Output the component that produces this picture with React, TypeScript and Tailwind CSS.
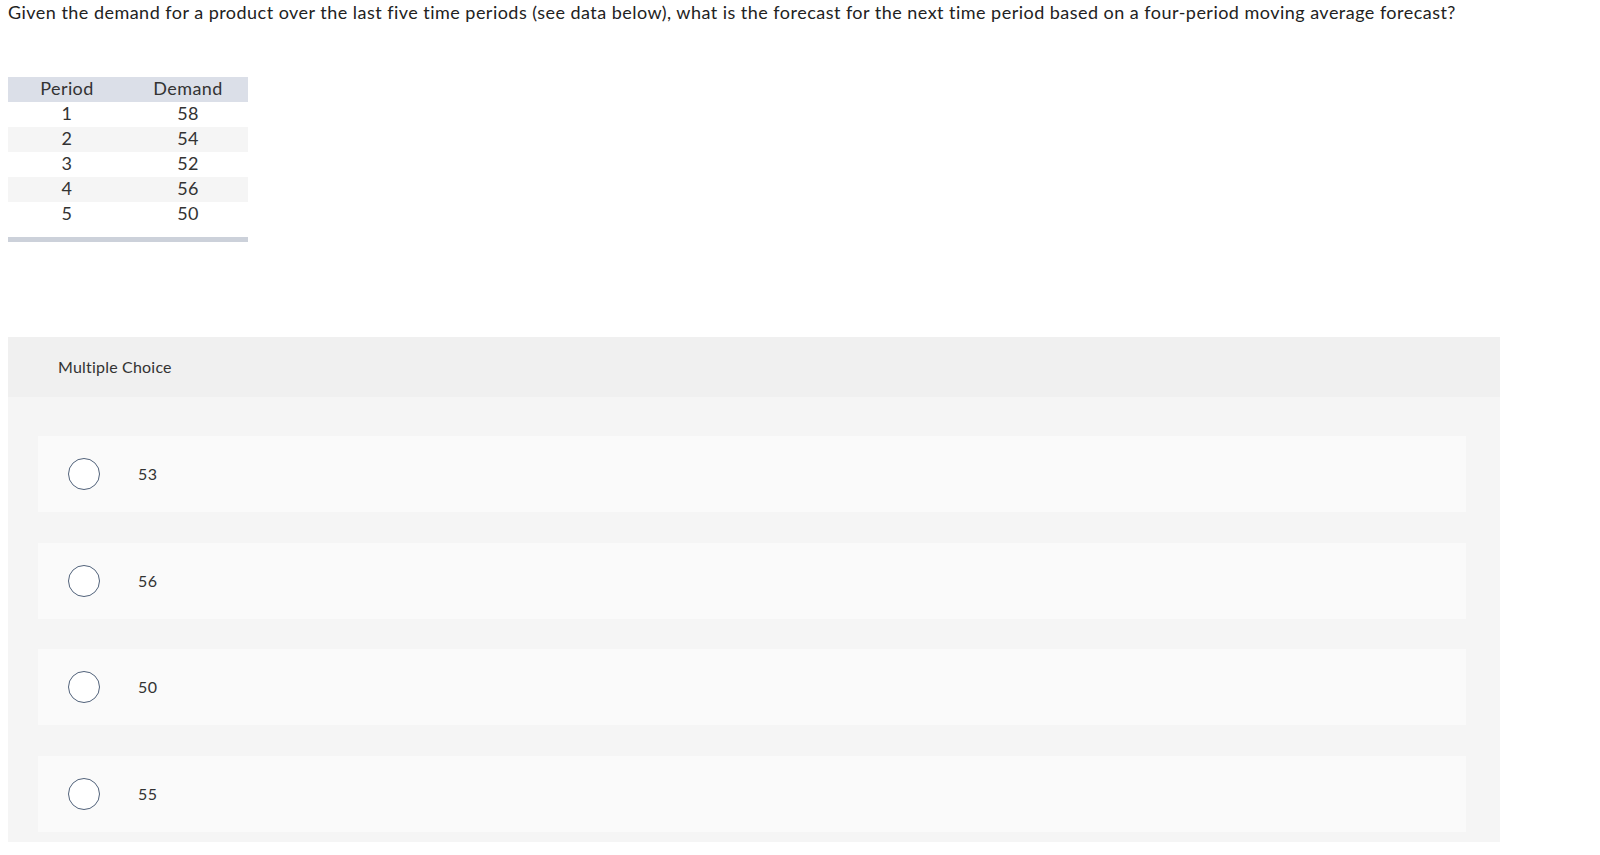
import React from 'react';

const rows = [
  { period: 1, demand: 58 },
  { period: 2, demand: 54 },
  { period: 3, demand: 52 },
  { period: 4, demand: 56 },
  { period: 5, demand: 50 },
];

const choices = ['53', '56', '50', '55'];

export default function App() {
  return (
    <div className="min-h-screen bg-white px-2 text-[#222] font-['Lato',sans-serif]">
      {/* Question */}
      <p className="text-[18px] leading-[24px] tracking-[0.47px]">
        Given the demand for a product over the last five time periods (see data below), what is the forecast for the next time period based on a four-period moving average forecast?
      </p>

      {/* Data table */}
      <div className="mt-[53px] w-[240px] text-[18px] leading-[22px] tracking-[0.4px] text-[#333]">
        <div className="grid grid-cols-2 h-[25px] items-center pb-[4px] bg-[#dbdfe8]">
          <span className="text-center pr-[2px]">Period</span>
          <span className="text-center">Demand</span>
        </div>
        {rows.map((row, i) => (
          <div
            key={row.period}
            className={`grid grid-cols-2 h-[25px] items-center pb-[4px] ${i % 2 === 1 ? 'bg-[#f5f5f5]' : 'bg-white'}`}
          >
            <span className="text-center pr-[2px]">{row.period}</span>
            <span className="text-center">{row.demand}</span>
          </div>
        ))}
        <div className="mt-[10px] h-[5px] bg-[#ccd1da]" />
      </div>

      {/* Multiple choice panel */}
      <div className="mt-[95px] w-[1492px] bg-[#f5f5f5] pb-[10px]">
        <div className="h-[60px] flex items-center pl-[50px] bg-[#f0f0f0] text-[16px] tracking-[0.2px] text-[#333]">
          Multiple Choice
        </div>
        <div className="pt-[39px] pl-[30px] pr-[34px] flex flex-col gap-[30.67px]">
          {choices.map((c) => (
            <label key={c} className="h-[76px] bg-[#fafafa] flex items-center pl-[30px] cursor-pointer">
              <span className="w-[32px] h-[32px] rounded-full border border-[#51627a] bg-white shrink-0" />
              <span className="ml-[38px] text-[16px] tracking-[0.35px] text-[#333]">{c}</span>
            </label>
          ))}
        </div>
      </div>
    </div>
  );
}
